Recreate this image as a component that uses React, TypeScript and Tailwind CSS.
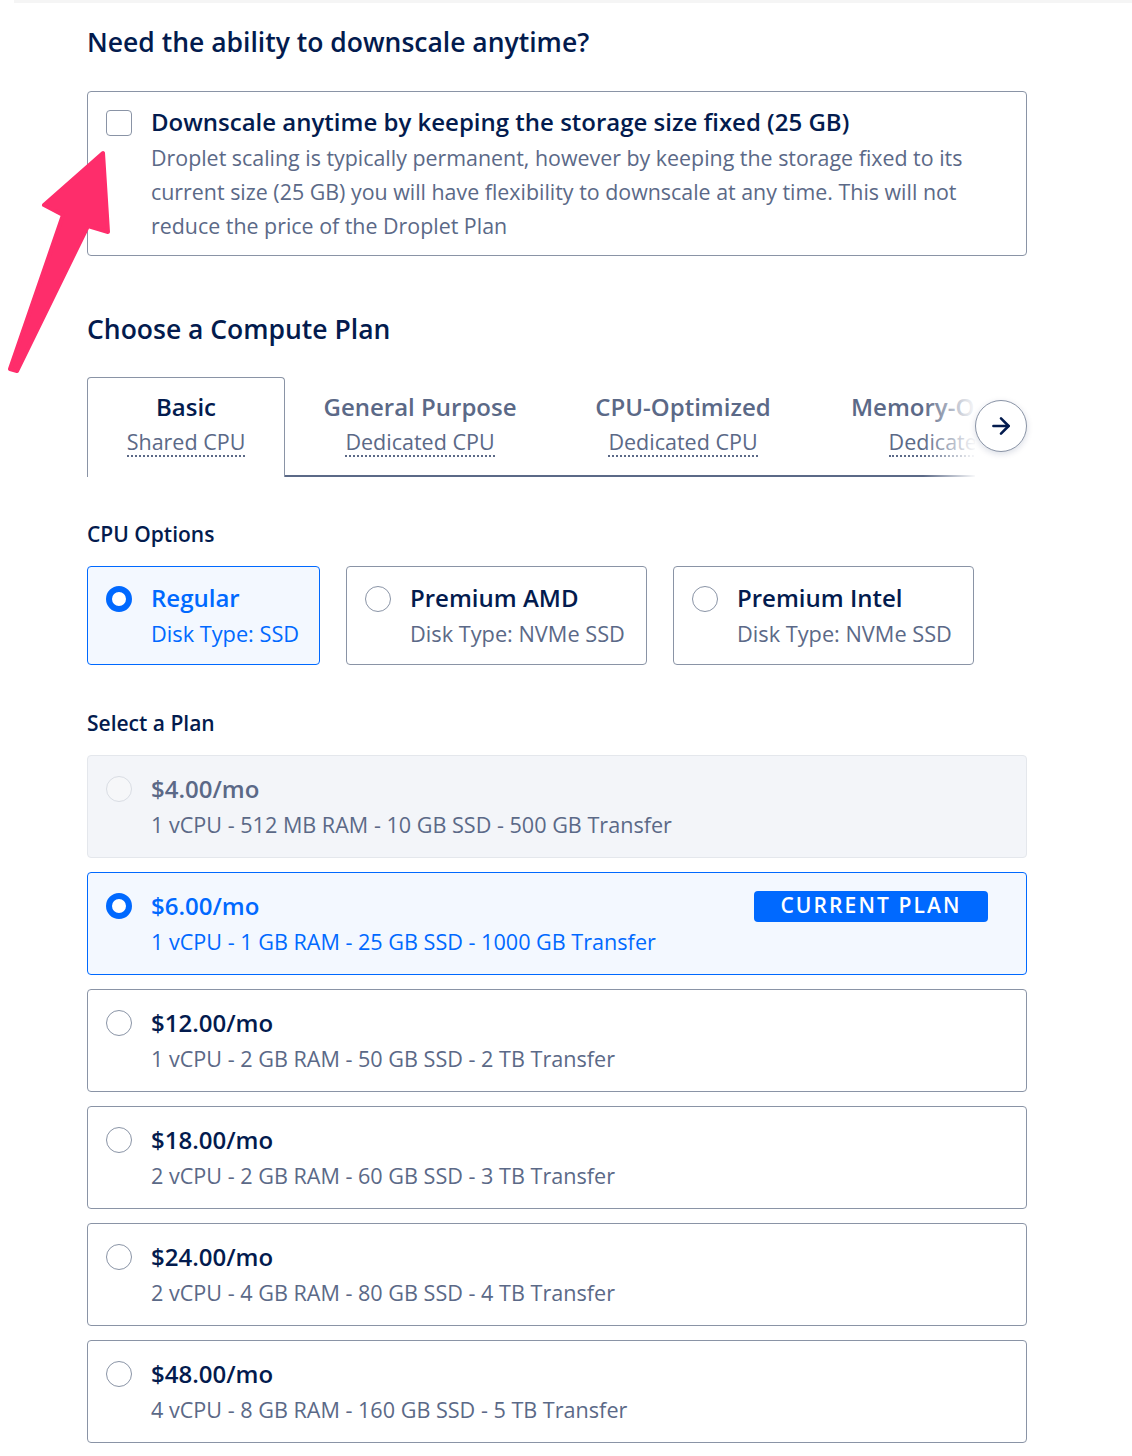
import { ArrowRight } from "lucide-react";

const plans = [
  { price: "$4.00/mo", spec: "1 vCPU - 512 MB RAM - 10 GB SSD - 500 GB Transfer", state: "disabled" },
  { price: "$6.00/mo", spec: "1 vCPU - 1 GB RAM - 25 GB SSD - 1000 GB Transfer", state: "selected" },
  { price: "$12.00/mo", spec: "1 vCPU - 2 GB RAM - 50 GB SSD - 2 TB Transfer", state: "normal" },
  { price: "$18.00/mo", spec: "2 vCPU - 2 GB RAM - 60 GB SSD - 3 TB Transfer", state: "normal" },
  { price: "$24.00/mo", spec: "2 vCPU - 4 GB RAM - 80 GB SSD - 4 TB Transfer", state: "normal" },
  { price: "$48.00/mo", spec: "4 vCPU - 8 GB RAM - 160 GB SSD - 5 TB Transfer", state: "normal" },
];

const cpuOptions = [
  { title: "Regular", sub: "Disk Type: SSD", selected: true, w: "w-[233px]" },
  { title: "Premium AMD", sub: "Disk Type: NVMe SSD", selected: false, w: "w-[301px]" },
  { title: "Premium Intel", sub: "Disk Type: NVMe SSD", selected: false, w: "w-[301px]" },
];

function Radio({ state }: { state: string }) {
  if (state === "selected") {
    return <span className="mt-[3px] h-[26px] w-[26px] shrink-0 rounded-full border-[6px] border-[#0069ff] bg-white" />;
  }
  if (state === "disabled") {
    return <span className="mt-[3px] h-[26px] w-[26px] shrink-0 rounded-full border border-[#d9dde4] bg-[#f6f7f9]" />;
  }
  return <span className="mt-[3px] h-[26px] w-[26px] shrink-0 rounded-full border border-[#8a94a6] bg-white" />;
}

// annotation arrow pointing at the checkbox
function PinkArrow() {
  return (
    <svg className="pointer-events-none absolute left-0 top-0" width="130" height="390" viewBox="0 0 130 390">
      <polygon
        points="103,153 108,232 88,226 17,371 10,369 63,215 44,205"
        fill="#fe2d6b"
        stroke="#fe2d6b"
        strokeWidth="4"
        strokeLinejoin="round"
      />
    </svg>
  );
}

export default function App() {
  return (
    <div className="relative min-h-[1456px] w-full bg-white font-['Open_Sans',sans-serif] text-[#031b4e]">
      <div className="ml-[14px] h-[3px] bg-[#f5f5f5]" />
      <div className="w-[1027px] pl-[87px] pt-[23px]">
        <h1 className="text-[26.5px] font-semibold leading-8">Need the ability to downscale anytime?</h1>

        <div className="mt-[33px] flex gap-[19px] rounded border border-[#8a94a6] pb-[12px] pl-[18px] pr-6 pt-[14px]">
          <span className="mt-[4px] h-[26px] w-[26px] shrink-0 rounded border border-[#8a94a6] bg-white" />
          <div>
            <div className="text-[24px] font-semibold leading-8">
              Downscale anytime by keeping the storage size fixed (25 GB)
            </div>
            <p className="mt-[3px] max-w-[820px] text-[21.4px] leading-[34px] text-[#5b6987]">
              Droplet scaling is typically permanent, however by keeping the storage fixed to its current size (25 GB)
              you will have flexibility to downscale at any time. This will not reduce the price of the Droplet Plan
            </p>
          </div>
        </div>

        <h2 className="mt-[57px] text-[26.5px] font-semibold leading-8">Choose a Compute Plan</h2>

        <div className="relative mt-[32px] h-[100px]">
          <div className="flex h-[100px] w-[888px] overflow-hidden">
            <div className="flex w-[198px] shrink-0 flex-col items-center rounded-t border-x border-t border-[#8a94a6] pt-[14px]">
              <span className="text-[24px] font-semibold leading-[30px]">Basic</span>
              <span className="mt-[7px] border-b-2 border-dotted border-[#5b6987] text-[21.5px] leading-[26px] text-[#5b6987]">
                Shared CPU
              </span>
            </div>
            <div className="flex w-[270px] shrink-0 flex-col items-center border-b-2 border-[#5b6987] pt-[15px]">
              <span className="text-[24px] font-semibold leading-[30px] text-[#5b6987]">General Purpose</span>
              <span className="mt-[7px] border-b-2 border-dotted border-[#5b6987] text-[21.5px] leading-[26px] text-[#5b6987]">
                Dedicated CPU
              </span>
            </div>
            <div className="flex w-[256px] shrink-0 flex-col items-center border-b-2 border-[#5b6987] pt-[15px]">
              <span className="text-[24px] font-semibold leading-[30px] text-[#5b6987]">CPU-Optimized</span>
              <span className="mt-[7px] border-b-2 border-dotted border-[#5b6987] text-[21.5px] leading-[26px] text-[#5b6987]">
                Dedicated CPU
              </span>
            </div>
            <div className="flex shrink-0 flex-col items-center border-b-2 border-[#5b6987] px-10 pt-[15px]">
              <span className="text-[24px] font-semibold leading-[30px] text-[#5b6987]">Memory-Optimized</span>
              <span className="mt-[7px] border-b-2 border-dotted border-[#5b6987] text-[21.5px] leading-[26px] text-[#5b6987]">
                Dedicated CPU
              </span>
            </div>
          </div>
          <div className="absolute left-[836px] top-0 h-[100px] w-[54px] bg-gradient-to-r from-white/0 to-white" />
          <button className="absolute right-0 top-[23px] flex h-[52px] w-[52px] items-center justify-center rounded-full border border-[#8a94a6] bg-white shadow-[0_2px_6px_rgba(3,27,78,0.15)]">
            <ArrowRight className="h-[26px] w-[26px] text-[#031b4e]" strokeWidth={2.4} />
          </button>
        </div>

        <h3 className="mt-[43px] text-[21px] font-semibold leading-7">CPU Options</h3>
        <div className="mt-[18px] flex gap-[26px]">
          {cpuOptions.map((o) => (
            <div
              key={o.title}
              className={`${o.w} flex gap-[19px] rounded border pb-[16px] pl-[18px] pt-[16px] ${
                o.selected ? "border-[#0069ff] bg-[#f3f8ff]" : "border-[#8a94a6] bg-white"
              }`}
            >
              <Radio state={o.selected ? "selected" : "normal"} />
              <div>
                <div className={`text-[24px] font-semibold leading-[30px] ${o.selected ? "text-[#0069ff]" : ""}`}>
                  {o.title}
                </div>
                <div className={`mt-[7px] text-[21.75px] leading-7 ${o.selected ? "text-[#0069ff]" : "text-[#5b6987]"}`}>
                  {o.sub}
                </div>
              </div>
            </div>
          ))}
        </div>

        <h3 className="mt-[44px] text-[21px] font-semibold leading-7">Select a Plan</h3>
        <div className="mt-[18px] flex flex-col gap-[14px]">
          {plans.map((p) => {
            const sel = p.state === "selected";
            const dis = p.state === "disabled";
            return (
              <div
                key={p.price}
                className={`flex h-[103px] gap-[19px] rounded border pl-[18px] pr-[38px] pt-[17px] ${
                  sel
                    ? "border-[#0069ff] bg-[#f3f8ff]"
                    : dis
                      ? "border-[#e4e7ec] bg-[#f3f5f9]"
                      : "border-[#8a94a6] bg-white"
                }`}
              >
                <Radio state={p.state} />
                <div className="flex-1">
                  <div className="flex items-center justify-between">
                    <span
                      className={`text-[24px] font-semibold leading-8 ${
                        sel ? "text-[#0069ff]" : dis ? "text-[#5b6987]" : ""
                      }`}
                    >
                      {p.price}
                    </span>
                    {sel && (
                      <span className="flex h-[31px] w-[234px] items-center justify-center rounded bg-[#0069ff] text-[21px] font-semibold tracking-[0.1em] text-white">
                        CURRENT PLAN
                      </span>
                    )}
                  </div>
                  <div className={`mt-[6px] text-[21.6px] leading-7 ${sel ? "text-[#0069ff]" : "text-[#5b6987]"}`}>
                    {p.spec}
                  </div>
                </div>
              </div>
            );
          })}
        </div>
      </div>
      <PinkArrow />
    </div>
  );
}
